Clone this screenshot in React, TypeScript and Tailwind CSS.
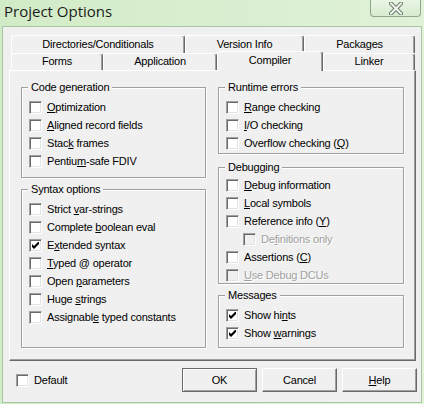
import React from 'react';

type CheckProps = {
  label: React.ReactNode;
  checked?: boolean;
  disabled?: boolean;
  indent?: boolean;
};

const CheckMark = () => (
  <svg width="7" height="7" viewBox="0 0 7 7">
    <path d="M0 2 L2 4 L7 -1 L7 2 L2 7 L0 5 Z" fill="#000" />
  </svg>
);

const Box = ({ checked, disabled }: { checked?: boolean; disabled?: boolean }) => (
  <span
    className={`flex items-center justify-center w-[13px] h-[13px] shrink-0 border border-t-[#a0a0a0] border-l-[#a0a0a0] border-r-white border-b-white shadow-[inset_1px_1px_0_#696969,inset_-1px_-1px_0_#e3e3e3] ${
      disabled ? 'bg-[#f0f0f0]' : 'bg-white'
    }`}
  >
    {checked && <CheckMark />}
  </span>
);

const Check = ({ label, checked, disabled, indent }: CheckProps) => (
  <div className={`flex items-center h-[18px] gap-[5px] ${indent ? 'pl-[18px]' : 'pl-[1px]'}`}>
    <Box checked={checked} disabled={disabled} />
    <span className={disabled ? 'text-[#a0a0a0] [text-shadow:1px_1px_0_#fff]' : ''}>{label}</span>
  </div>
);

const Group = ({ title, className, children }: { title: string; className: string; children: React.ReactNode }) => (
  <fieldset className={`border border-[#a0a0a0] shadow-[inset_1px_1px_0_#fff,1px_1px_0_#fff] pl-[6px] ${className}`}>
    <legend className="px-[3px] leading-[13px] bg-[#f0f0f0]">{title}</legend>
    {children}
  </fieldset>
);

const Tab = ({ label, className }: { label: string; className: string }) => (
  <div
    className={`flex items-center justify-center pb-[1px] bg-[#f0f0f0] border-t border-l border-r border-t-white border-l-white border-r-[#696969] rounded-t-[3px] shadow-[inset_-1px_0_0_#a0a0a0] ${className}`}
  >
    {label}
  </div>
);

const Button = ({ children, isDefault }: { children: React.ReactNode; isDefault?: boolean }) => (
  <button
    className={`w-[75px] h-[24px] bg-[#f0f0f0] border ${
      isDefault
        ? 'border-[#696969] shadow-[inset_1px_1px_0_#fff,inset_-1px_-1px_0_#a0a0a0]'
        : 'border-t-white border-l-white border-r-[#696969] border-b-[#696969] shadow-[inset_-1px_-1px_0_#a0a0a0]'
    }`}
  >
    {children}
  </button>
);

const CloseGlyph = () => (
  <svg width="16" height="13" viewBox="0 0 16 13">
    <path d="M3 1.5 L13 11.5 M13 1.5 L3 11.5" stroke="#6f7d6c" strokeWidth="4" strokeLinecap="round" />
    <path d="M3 1.5 L13 11.5 M13 1.5 L3 11.5" stroke="#f4f8f2" strokeWidth="2" strokeLinecap="round" />
  </svg>
);

export default function App() {
  return (
    <div className="w-[424px] h-[404px] flex flex-col bg-gradient-to-r from-[#d2ebc7] to-[#e0f2d8] font-['Liberation_Sans',Arial,sans-serif] text-[11px] tracking-[-0.2px] text-black overflow-hidden">
      {/* title bar */}
      <div className="h-[26px] flex justify-between shrink-0">
        <div className="pl-[4px] pt-[1px] font-['Open_Sans',sans-serif] text-[15px] leading-[20px] tracking-normal text-[#1b1b1b]">
          Project Options
        </div>
        <div className="mr-[3px] w-[51px] h-[17px] flex items-center justify-center rounded-b-[4px] border border-t-0 border-[#8fa68a] bg-gradient-to-b from-[#e9f5e4] to-[#d7ecd0]">
          <CloseGlyph />
        </div>
      </div>

      {/* client area */}
      <div className="flex-1 mx-[2px] mb-[1px] border border-[#a8c6a0] bg-[#f0f0f0] flex flex-col pt-[8px] pl-[6px] pr-[5px]">
        {/* tabs */}
        <div className="flex ml-[2px] h-[18px]">
          <Tab label="Directories/Conditionals" className="w-[174px]" />
          <Tab label="Version Info" className="w-[119px]" />
          <Tab label="Packages" className="w-[111px]" />
        </div>
        <div className="flex ml-[2px] h-[17px]">
          <Tab label="Forms" className="w-[92px] h-[17px]" />
          <Tab label="Application" className="w-[114px] h-[17px]" />
          <Tab label="Compiler" className="w-[106px] h-[20px] -mt-[2px] relative z-10 pb-[3px]" />
          <Tab label="Linker" className="w-[92px] h-[17px]" />
        </div>

        {/* page */}
        <div className="h-[291px] border border-t-white border-l-white border-r-[#696969] border-b-[#696969] shadow-[inset_-1px_-1px_0_#a0a0a0] pt-[10px] pl-[11px] flex gap-[12px]">
          <div className="w-[185px] flex flex-col">
            <Group title="Code generation" className="h-[97px] pt-[4px]">
              <Check label={<><u>O</u>ptimization</>} />
              <Check label={<><u>A</u>ligned record fields</>} />
              <Check label={<>Stac<u>k</u> frames</>} />
              <Check label={<>Pentiu<u>m</u>-safe FDIV</>} />
            </Group>
            <Group title="Syntax options" className="h-[165px] mt-[5px] pt-[4px]">
              <Check label={<>Strict <u>v</u>ar-strings</>} />
              <Check label={<>Complete <u>b</u>oolean eval</>} />
              <Check checked label={<>E<u>x</u>tended syntax</>} />
              <Check label={<><u>T</u>yped @ operator</>} />
              <Check label={<>Open <u>p</u>arameters</>} />
              <Check label={<>Huge <u>s</u>trings</>} />
              <Check label={<>Assignabl<u>e</u> typed constants</>} />
            </Group>
          </div>
          <div className="w-[186px] flex flex-col">
            <Group title="Runtime errors" className="h-[73px] pt-[4px]">
              <Check label={<><u>R</u>ange checking</>} />
              <Check label={<><u>I</u>/O checking</>} />
              <Check label={<>Overflow checking (<u>Q</u>)</>} />
            </Group>
            <Group title="Debugging" className="h-[123px] mt-[7px] pt-[2px]">
              <Check label={<><u>D</u>ebug information</>} />
              <Check label={<><u>L</u>ocal symbols</>} />
              <Check label={<>Reference info (<u>Y</u>)</>} />
              <Check indent disabled label={<>De<u>f</u>initions only</>} />
              <Check label={<>Assertions (<u>C</u>)</>} />
              <Check disabled label={<><u>U</u>se Debug DCUs</>} />
            </Group>
            <Group title="Messages" className="h-[59px] mt-[5px] pt-[4px]">
              <Check checked label={<>Show hi<u>n</u>ts</>} />
              <Check checked label={<>Show <u>w</u>arnings</>} />
            </Group>
          </div>
        </div>

        {/* bottom row */}
        <div className="mt-[7px] flex items-center">
          <div className="pl-[7px] flex items-center gap-[5px]">
            <Box />
            <span>Default</span>
          </div>
          <div className="ml-auto mr-[-1px] flex gap-[5px]">
            <Button isDefault>OK</Button>
            <Button>Cancel</Button>
            <Button>
              <u>H</u>elp
            </Button>
          </div>
        </div>
      </div>
    </div>
  );
}
